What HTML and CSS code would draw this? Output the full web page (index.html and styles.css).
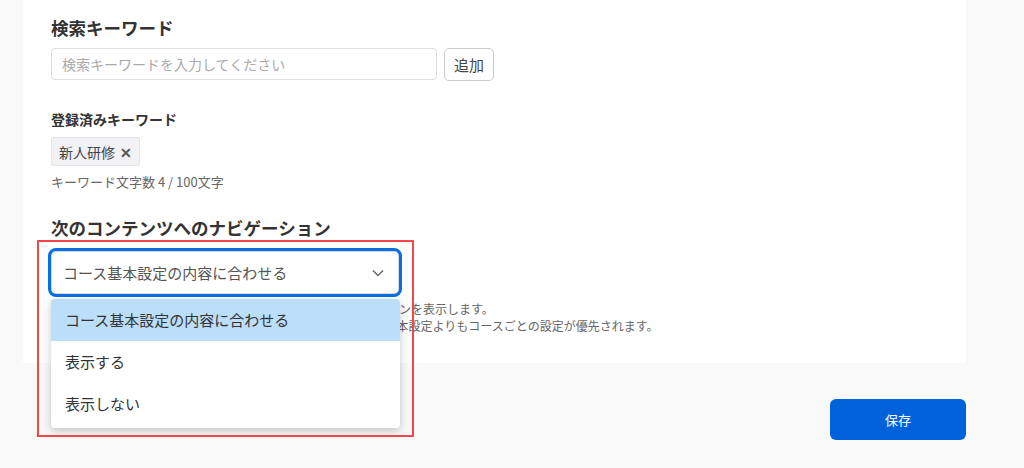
FILE: index.html
```html
<!DOCTYPE html>
<html lang="ja">
<head>
  <meta charset="utf-8" />
  <title>コース設定</title>
  <link rel="stylesheet" href="styles.css">
</head>
<body>
<div class="cs-page">
  <div class="cs-card">
    <h2 class="cs-heading">検索キーワード</h2>
    <div class="cs-keyword-row">
      <input class="cs-input" type="text" placeholder="検索キーワードを入力してください" />
      <button class="cs-button">追加</button>
    </div>

    <h3 class="cs-subheading">登録済みキーワード</h3>
    <div class="cs-chips">
      <span class="cs-chip">新人研修 <span class="cs-chip--close">&#x2715;</span></span>
    </div>
    <p class="cs-note">キーワード文字数 4 / 100文字</p>

    <h2 class="cs-heading cs-heading--nav">次のコンテンツへのナビゲーション</h2>
    <div class="cs-nav">
      <div class="cs-select-wrap">
        <div class="cs-select">
          <span>コース基本設定の内容に合わせる</span>
          <svg class="cs-chevron" width="12" height="8" viewBox="0 0 12 8"><path d="M1 1.5 L6 6.5 L11 1.5" fill="none" stroke="#666" stroke-width="1.5"/></svg>
        </div>
        <ul class="cs-menu">
          <li class="cs-menu--item cs-menu--active">コース基本設定の内容に合わせる</li>
          <li class="cs-menu--item">表示する</li>
          <li class="cs-menu--item">表示しない</li>
        </ul>
      </div>
      <p class="cs-help">
        コンテンツの最後に次のコンテンツへ移動するためのリンクボタンを表示します。<br />
        ※この設定はコース基本設定でも変更できます。なお、コース基本設定よりもコースごとの設定が優先されます。
      </p>
      <div class="cs-mark"></div>
    </div>
  </div>

  <div class="cs-actions">
    <button class="cs-save">保存</button>
  </div>
</div>
</body>
</html>
```

FILE: styles.css
```css
:root {
  --bg: #f9f9f9;
  --white: #fff;
  --text: #333;
  --muted: #666;
  --line: #ddd;
  --blue: #0062db;
  --ring: #0a6de3;
  --pick: #bbdefb;
  --mark: #f04848;
}
html, body {
  height: 100%;
}
body {
  margin: 0;
  background-color: var(--bg);
  font-family: "Noto Sans CJK JP", "Noto Sans", sans-serif;
  color: var(--text);
}
.cs-page {
  width: 943px;
  padding-left: 23px;
}
.cs-card {
  background-color: var(--white);
  height: 363px;
  box-sizing: border-box;
  padding: 15px 28px 0;
}
.cs-heading {
  margin: 0;
  font-size: 17.5px;
  line-height: 26px;
  font-weight: bold;
}
.cs-heading--nav {
  margin-top: 24px;
}
.cs-keyword-row {
  display: flex;
  gap: 7px;
  margin-top: 7px;
}
.cs-input {
  width: 386px;
  height: 32px;
  box-sizing: border-box;
  border: 1px solid #e0e0e0;
  border-radius: 4px;
  padding: 0 10px;
  font-family: inherit;
  font-size: 14px;
  color: var(--text);
}
.cs-input::placeholder {
  color: #aaa;
}
.cs-button {
  width: 50px;
  height: 33px;
  box-sizing: border-box;
  background: var(--white);
  border: 1px solid #ccc;
  border-radius: 5px;
  font-family: inherit;
  font-size: 15px;
  color: #444;
  padding: 0;
}
.cs-subheading {
  margin: 28px 0 0;
  font-size: 14px;
  line-height: 20px;
  font-weight: bold;
}
.cs-chips {
  display: flex;
  margin-top: 8px;
}
.cs-chip {
  display: inline-flex;
  align-items: center;
  height: 29px;
  box-sizing: border-box;
  padding: 0 7px;
  background-color: #f1f1f6;
  border: 1px solid #e4e4ec;
  border-radius: 2px;
  font-size: 14px;
  color: #444;
}
.cs-chip--close {
  margin-left: 5px;
  font-size: 14px;
  font-weight: bold;
  color: #555;
}
.cs-note {
  margin: 7px 0 0;
  font-size: 13px;
  line-height: 18px;
  color: var(--muted);
}
.cs-nav {
  position: relative;
  margin-top: 7px;
}
.cs-select-wrap {
  position: relative;
  width: 348px;
  padding: 3px;
  margin-left: -3px;
}
.cs-select-wrap::before {
  content: "";
  position: absolute;
  inset: 0;
  border: 3px solid var(--ring);
  border-radius: 8px;
}
.cs-select {
  display: flex;
  align-items: center;
  justify-content: space-between;
  height: 43px;
  box-sizing: border-box;
  padding: 0 12px 0 11px;
  border: 1px solid #d8d8d8;
  border-radius: 4px;
  background: var(--white);
  font-size: 15px;
  color: #555;
}
.cs-chevron {
  margin-right: 2px;
}
.cs-menu {
  position: absolute;
  z-index: 2;
  left: 3px;
  top: 51px;
  width: 349px;
  margin: 0;
  padding: 0 0 3px;
  list-style: none;
  background: var(--white);
  border-radius: 4px;
  box-shadow: 0 3px 10px rgba(0, 0, 0, 0.22);
  overflow: hidden;
}
.cs-menu--item {
  height: 42px;
  line-height: 42px;
  padding-left: 14px;
  font-size: 15px;
  color: #333;
}
.cs-menu--active {
  background-color: var(--pick);
}
.cs-help {
  margin: 3px 0 0;
  font-size: 12px;
  line-height: 17px;
  color: var(--muted);
}
.cs-mark {
  position: absolute;
  z-index: 3;
  left: -14px;
  top: -8px;
  width: 377px;
  height: 197px;
  box-sizing: border-box;
  border: 2px solid var(--mark);
  pointer-events: none;
}
.cs-actions {
  display: flex;
  justify-content: flex-end;
  padding-top: 36px;
}
.cs-save {
  width: 136px;
  height: 41px;
  border: none;
  border-radius: 6px;
  background-color: var(--blue);
  color: var(--white);
  font-family: inherit;
  font-size: 13px;
}
```
